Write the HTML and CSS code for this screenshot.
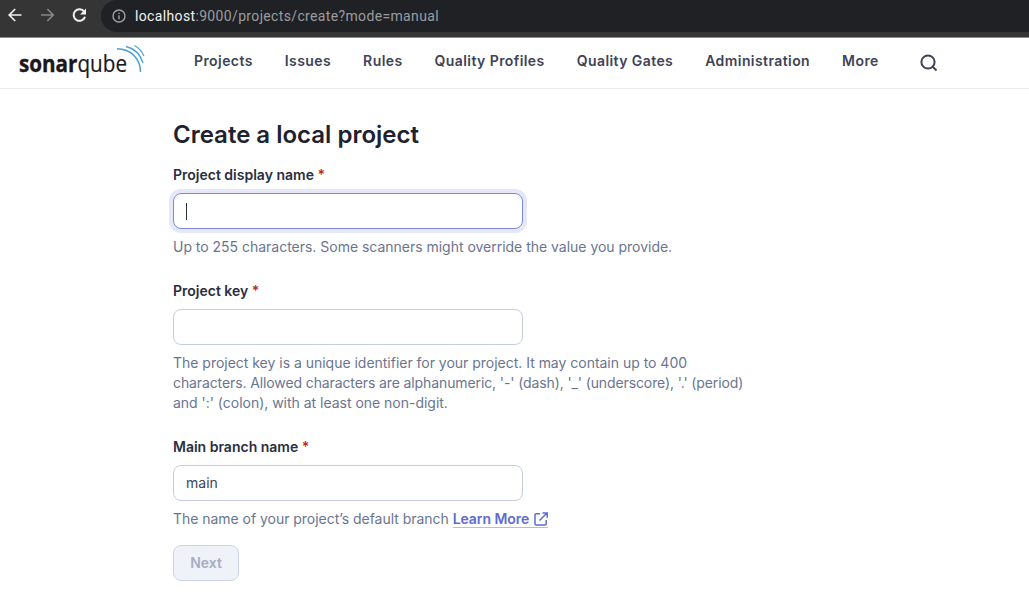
FILE: index.html
```html
<!DOCTYPE html>
<html lang="en">
<head>
<meta charset="utf-8">
<title>Create a local project</title>
<link rel="stylesheet" href="styles.css">
</head>
<body>
<div class="browser">
  <svg class="controls" width="101" height="32" viewBox="0 0 101 32" fill="none">
    <path class="back" d="M21.500 15H9.500M15.200 9l-6 6 6 6"/>
    <path class="forward" d="M41 15h12M47.300 9l6 6-6 6"/>
    <path class="reload" d="M84.200 11.700A5.800 5.800 0 1 0 85 16.700"/>
    <path class="reload-tip" d="M86 8.500v6h-6z"/>
  </svg>
  <div class="address">
    <svg width="14" height="14" viewBox="0 0 14 14" fill="none" stroke="#a0a2a5" stroke-width="1.4"><circle cx="7" cy="7" r="6"/><path d="M7 6.2v4M7 3.7v1.4"/></svg>
    <span class="url"><b>localhost</b>:9000/projects/create?mode=manual</span>
  </div>
</div>
<header class="header">
  <svg class="logo" width="130" height="36" viewBox="0 0 130 36" role="img" aria-label="sonarqube">
    <text class="logo-word" x="0" y="26.500" textLength="108" lengthAdjust="spacingAndGlyphs"><tspan class="logo-bold">sonar</tspan><tspan class="logo-light">qube</tspan></text>
    <g fill="none" stroke="#4b9fd5">
      <path stroke-width="1.5" d="M98 3.800C112 3.800 121.500 14 121.500 27"/>
      <path stroke-width="1.3" d="M107 1.500C115.500 3.500 121.500 10 124 18"/>
      <path stroke-width="1.1" d="M115.500 .500C119.500 2.800 123 6.500 125 11"/>
    </g>
  </svg>
  <nav class="nav">
    <a>Projects</a><a>Issues</a><a>Rules</a><a>Quality Profiles</a><a>Quality Gates</a><a>Administration</a><a>More</a>
  </nav>
  <svg class="search" width="18" height="18" viewBox="0 0 18 18" fill="none" stroke="#3e4357" stroke-width="2"><circle cx="8" cy="8" r="6.600"/><path d="M12.500 12.500l4 4"/></svg>
</header>
<main class="page">
  <h1 class="title">Create a local project</h1>
  <section class="group">
    <label class="label" for="name">Project display name <em>*</em></label>
    <div class="field focused"><span class="caret"></span><input id="name" type="text"></div>
    <p class="hint">Up to 255 characters. Some scanners might override the value you provide.</p>
  </section>
  <section class="group">
    <label class="label" for="key">Project key <em>*</em></label>
    <div class="field"><input id="key" type="text"></div>
    <p class="hint">The project key is a unique identifier for your project. It may contain up to 400<br><span class="tight">characters. Allowed characters are alphanumeric, '-' (dash), '_' (underscore), '.' (period)</span><br>and ':' (colon), with at least one non-digit.</p>
  </section>
  <section class="group last">
    <label class="label" for="branch">Main branch name <em>*</em></label>
    <div class="field"><input id="branch" type="text" value="main"></div>
    <p class="hint snug">The name of your project’s default branch <a class="link">Learn More<svg width="14" height="14" viewBox="0 0 14 14" fill="none" stroke="#5d6cd0" stroke-width="1.5"><path d="M6 1.800H2.200Q1 1.800 1 3v8.800Q1 13 2.200 13H11q1.200 0 1.200-1.200V8M5.500 8.500l7-7M8.500 1h4.700v4.700"/></svg></a></p>
  </section>
  <button class="next" disabled>Next</button>
</main>
</body>
</html>
```
FILE: styles.css
```css
* { box-sizing: border-box; }
body {
  margin: 0;
  height: 606px;
  overflow: hidden;
  background: #fff;
  color: #3e4357;
  font: 14px/20px Inter, sans-serif;
}
.browser {
  display: flex;
  height: 38px;
  background: #353535;
  border-bottom: 1px solid #8a8a8a;
}
.controls { flex: none; }
.back, .forward, .reload { stroke: #f1f1f1; stroke-width: 1.7; }
.forward { stroke: #858585; }
.reload { stroke-width: 2; }
.reload-tip { fill: #f1f1f1; }
.address {
  flex: 1;
  display: flex;
  align-items: center;
  gap: 9px;
  height: 32px;
  padding: 0 0 1px 11px;
  background: #202124;
  border-radius: 16px 0 0 16px;
}
.url {
  color: #9a9da1;
  font: 14px/20px Roboto, sans-serif;
  letter-spacing: 0.35px;
}
.url b { color: #f1f1f1; font-weight: 400; }
.header {
  display: flex;
  align-items: flex-start;
  height: 51px;
  padding: 7px 0 0 19px;
  border-bottom: 1px solid #ebebeb;
}
.logo { flex: none; }
.logo-word { font-family: "Open Sans", sans-serif; font-size: 23px; fill: #1b171b; stroke: #1b171b; }
.logo-bold { font-weight: 700; stroke-width: 0.4px; }
.logo-light { font-weight: 400; stroke-width: 0.2px; }
.nav {
  display: flex;
  gap: 32px;
  margin: 6px 0 0 45px;
  font-weight: 600;
  letter-spacing: 0.42px;
  white-space: nowrap;
}
.search { flex: none; margin: 9px 0 0 41px; }
.page { padding: 30px 0 0 173px; }
.title {
  margin: 0 0 14px;
  color: #1d2130;
  font-size: 24px;
  font-weight: 600;
  line-height: 32px;
}
.group { margin-bottom: 24px; }
.last { margin-bottom: 16px; }
.label {
  display: block;
  margin-bottom: 8px;
  color: #292e40;
  font-weight: 600;
}
.label em { color: #b82b22; font-style: normal; }
.field {
  display: flex;
  align-items: center;
  width: 350px;
  height: 36px;
  margin-bottom: 8px;
  padding: 0 12px;
  border: 1px solid #c5cddf;
  border-radius: 8px;
}
.focused { border-color: #7b87d9; box-shadow: 0 0 0 4px #e6e8f9; }
.field input {
  flex: 1;
  min-width: 0;
  padding: 0;
  border: 0;
  outline: 0;
  background: none;
  color: #3e4357;
  font: inherit;
}
.caret { width: 1px; height: 17px; background: #292e40; }
.hint { margin: 0; color: #6a7590; letter-spacing: -0.018px; white-space: nowrap; }
.tight { letter-spacing: -0.11px; }
.snug { letter-spacing: -0.035px; }
.link {
  display: inline-block;
  height: 19px;
  border-bottom: 1px solid #b3bcf0;
  color: #5d6cd0;
  font-weight: 600;
  letter-spacing: -0.05px;
}
.link svg { margin-left: 5px; vertical-align: -2px; }
.next {
  width: 66px;
  height: 36px;
  padding: 0;
  border: 1px solid #ccd3e6;
  border-radius: 8px;
  background: #eff2f9;
  color: #a6adc3;
  font: 600 14px/20px Inter, sans-serif;
}
```
